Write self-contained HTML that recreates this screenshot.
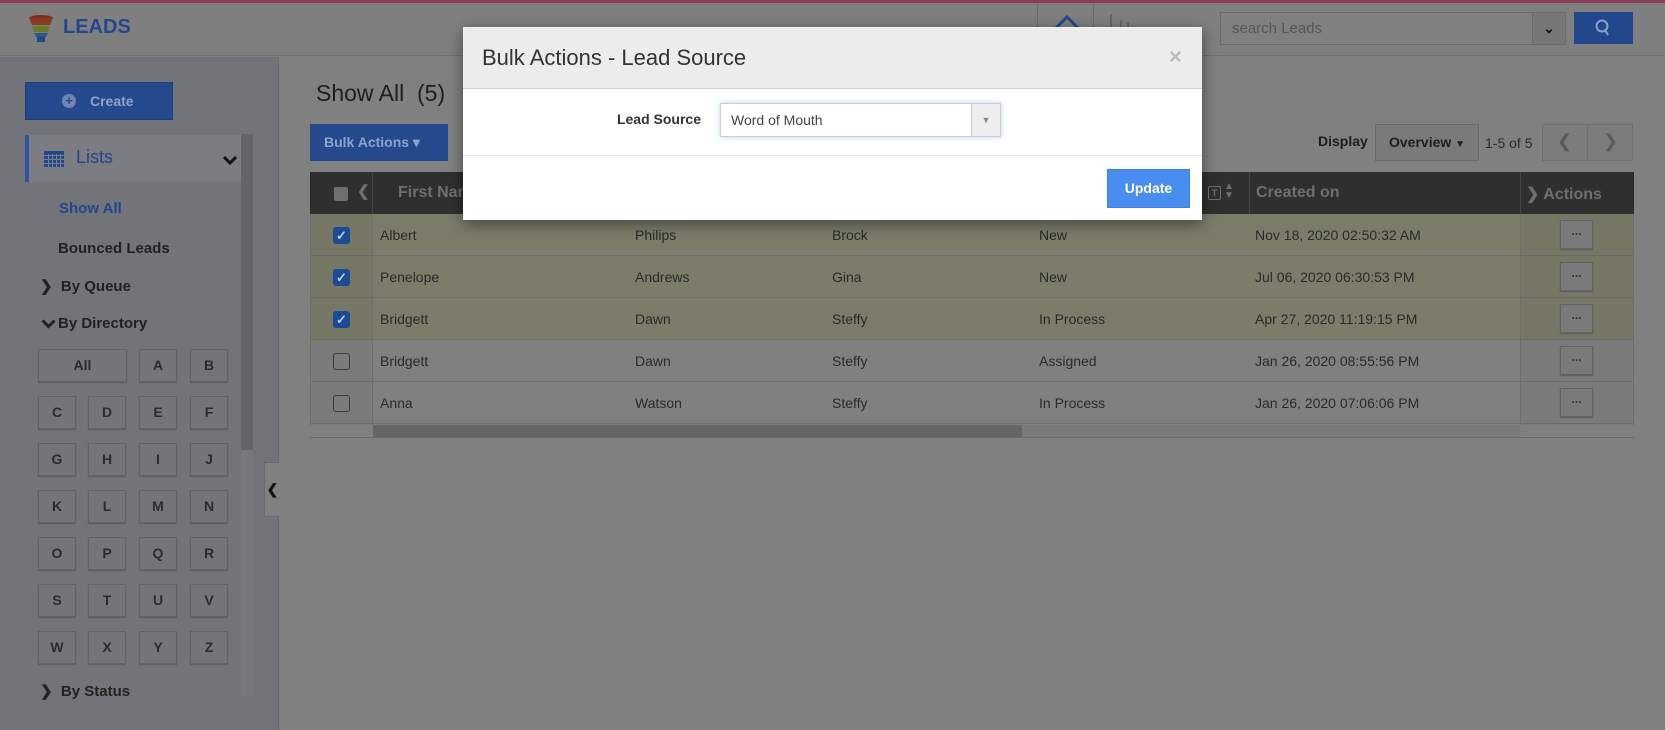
<!DOCTYPE html>
<html><head><meta charset="utf-8"><style>
*{box-sizing:border-box;margin:0;padding:0}
body{width:1665px;height:730px;position:relative;overflow:hidden;background:#808080;font-family:"Liberation Sans",sans-serif;color:#222}
.a{position:absolute}
.lb{position:absolute;width:38px;height:33px;background:#747579;border:1px solid #616266;box-shadow:0 1px 1px #5a5a5e;font-weight:bold;font-size:14px;color:#2b2b2b;text-align:center;line-height:31px}
.row{position:absolute;left:310px;width:1324px;height:42px;border-bottom:1px solid #6e6e6e;font-size:14px;color:#2a2a2a}
.row span{position:absolute;top:13px}
.cb{position:absolute;left:23px;top:13px;width:17px;height:17px;border-radius:3px}
.cbon{background:#1d4f9e;color:#cfd6e4;font-size:13px;text-align:center;line-height:17px;font-weight:bold}
.cboff{border:1px solid #3f3f3f;background:#808080}
.dots{position:absolute;left:1250px;top:6px;width:33px;height:29px;background:#7f7f7f;border:1px solid #666;box-shadow:0 1px 1px #5f5f5f;text-align:center;font-size:12px;line-height:20px;color:#333;font-weight:bold}
</style></head><body>
<!-- top pink line -->
<div class="a" style="left:0;top:0;width:1665px;height:3px;background:#8a3b55"></div>
<!-- header -->
<div class="a" style="left:0;top:3px;width:1665px;height:53px;background:#7f7f7f;border-bottom:1px solid #6d6d6d"></div>
<svg class="a" style="left:27px;top:14px" width="30" height="30" viewBox="0 0 30 30">
<ellipse cx="14" cy="4" rx="12" ry="3" fill="#7a2b24"/>
<path d="M2 4 H26 L23 11 H5Z" fill="#8a3a1e"/>
<path d="M5 12 H23 L21 18 H7Z" fill="#6b7a2a"/>
<path d="M7 19 H21 L19 23 H9Z" fill="#2a5a8a"/>
<rect x="10" y="23" width="8" height="5" fill="#1d4a80"/>
</svg>
<div class="a" style="left:63px;top:16px;font-size:20px;font-weight:bold;color:#23478c">LEADS</div>
<div class="a" style="left:1037px;top:3px;width:1px;height:53px;background:#6b6b6b"></div>
<div class="a" style="left:1093px;top:3px;width:1px;height:53px;background:#6b6b6b"></div>
<svg class="a" style="left:1054px;top:14px" width="26" height="16" viewBox="0 0 26 16"><path d="M2 14 L13 3 L24 14" fill="none" stroke="#23478c" stroke-width="3"/><path d="M6 14 V16 M20 14 V16" stroke="#23478c" stroke-width="2"/></svg>
<div class="a" style="left:1110px;top:14px;width:2px;height:16px;background:#666"></div>
<div class="a" style="left:1120px;top:20px;width:2px;height:10px;background:#666"></div>
<div class="a" style="left:1127px;top:22px;width:2px;height:8px;background:#666"></div>
<div class="a" style="left:1220px;top:12px;width:313px;height:33px;border:1px solid #6a6a6a;background:#808080;font-size:15px;color:#555;padding:7px 11px">search Leads</div>
<div class="a" style="left:1532px;top:12px;width:34px;height:33px;border:1px solid #6a6a6a;background:#777;text-align:center;line-height:31px;font-size:14px;color:#111;font-weight:bold">&#8964;</div>
<div class="a" style="left:1574px;top:12px;width:59px;height:32px;background:#23478c"></div>
<svg class="a" style="left:1594px;top:18px" width="18" height="20" viewBox="0 0 18 20"><circle cx="8" cy="8" r="5.5" fill="none" stroke="#8aa0c8" stroke-width="2"/><path d="M11 12 L14 17" stroke="#8aa0c8" stroke-width="2"/></svg>

<!-- sidebar -->
<div class="a" style="left:0;top:57px;width:279px;height:673px;background:#737479;border-right:1px solid #6a6a6a"></div>
<div class="a" style="left:25px;top:82px;width:148px;height:38px;background:#24498d;border:1px solid #1f3f78;color:#8ea3c9;font-weight:bold;font-size:14px;line-height:36px;padding-left:64px">Create</div>
<div class="a" style="left:62px;top:94px;width:14px;height:14px;border-radius:50%;background:#6f86b2;color:#24498d;font-size:13px;line-height:14px;text-align:center;font-weight:bold">+</div>
<div class="a" style="left:25px;top:135px;width:216px;height:47px;background:#7c7d82;border-left:4px solid #2a55a5"></div>
<svg class="a" style="left:44px;top:151px" width="20" height="16" viewBox="0 0 20 16"><rect x="0" y="0" width="20" height="16" fill="#23478c"/><g stroke="#7c7d82" stroke-width="1"><path d="M0 4.5H20M0 8.5H20M0 12.5H20M4.5 3V16M8.5 3V16M12.5 3V16M16.5 3V16"/></g></svg>
<div class="a" style="left:76px;top:147px;font-size:18px;color:#23478c">Lists</div>
<svg class="a" style="left:222px;top:155px" width="16" height="12" viewBox="0 0 16 12"><path d="M2 2 L8 8 L14 2" fill="none" stroke="#111" stroke-width="3"/></svg>
<div class="a" style="left:241px;top:134px;width:12px;height:563px;background:#77787c"></div>
<div class="a" style="left:241px;top:134px;width:12px;height:316px;background:#636468"></div>
<div class="a" style="left:59px;top:200px;font-size:15px;font-weight:bold;color:#23478c">Show All</div>
<div class="a" style="left:58px;top:240px;font-size:15px;font-weight:bold;color:#222">Bounced Leads</div>
<div class="a" style="left:40px;top:277px;font-size:15px;font-weight:bold;color:#222">&#10095;&nbsp; By Queue</div>
<svg class="a" style="left:41px;top:319px" width="15" height="10" viewBox="0 0 15 10"><path d="M1.5 1.5 L7.5 7.5 L13.5 1.5" fill="none" stroke="#222" stroke-width="3"/></svg>
<div class="a" style="left:58px;top:315px;font-size:15px;font-weight:bold;color:#222">By Directory</div>
<div class="a" style="left:40px;top:682px;font-size:15px;font-weight:bold;color:#222">&#10095;&nbsp; By Status</div>
<div class="lb" style="left:38px;top:349px;width:89px">All</div>
<div class="lb" style="left:139px;top:349px">A</div><div class="lb" style="left:190px;top:349px">B</div>
<div class="lb" style="left:38px;top:396px">C</div><div class="lb" style="left:88px;top:396px">D</div><div class="lb" style="left:139px;top:396px">E</div><div class="lb" style="left:190px;top:396px">F</div>
<div class="lb" style="left:38px;top:443px">G</div><div class="lb" style="left:88px;top:443px">H</div><div class="lb" style="left:139px;top:443px">I</div><div class="lb" style="left:190px;top:443px">J</div>
<div class="lb" style="left:38px;top:490px">K</div><div class="lb" style="left:88px;top:490px">L</div><div class="lb" style="left:139px;top:490px">M</div><div class="lb" style="left:190px;top:490px">N</div>
<div class="lb" style="left:38px;top:537px">O</div><div class="lb" style="left:88px;top:537px">P</div><div class="lb" style="left:139px;top:537px">Q</div><div class="lb" style="left:190px;top:537px">R</div>
<div class="lb" style="left:38px;top:584px">S</div><div class="lb" style="left:88px;top:584px">T</div><div class="lb" style="left:139px;top:584px">U</div><div class="lb" style="left:190px;top:584px">V</div>
<div class="lb" style="left:38px;top:631px">W</div><div class="lb" style="left:88px;top:631px">X</div><div class="lb" style="left:139px;top:631px">Y</div><div class="lb" style="left:190px;top:631px">Z</div>
<div class="a" style="left:264px;top:462px;width:16px;height:55px;background:#808080;border:1px solid #6a6a6a;border-right:none;font-weight:bold;font-size:14px;line-height:53px;text-align:center;color:#111">&#10094;</div>

<!-- main -->
<div class="a" style="left:316px;top:80px;font-size:23px;color:#1e1e1e">Show All&nbsp; (5)</div>
<div class="a" style="left:310px;top:124px;width:138px;height:37px;background:#24498d;color:#8ea3c9;font-weight:bold;font-size:14px;line-height:37px;padding-left:14px">Bulk Actions &#9662;</div>
<div class="a" style="left:1318px;top:133px;font-size:14px;font-weight:bold;color:#1e1e1e">Display</div>
<div class="a" style="left:1375px;top:124px;width:104px;height:37px;background:#7a7a7a;border:1px solid #686868;font-size:14px;font-weight:bold;color:#1e1e1e;line-height:35px;padding-left:13px">Overview <span style="font-size:10px">&#9660;</span></div>
<div class="a" style="left:1485px;top:135px;font-size:14px;color:#2a2a2a">1-5 of 5</div>
<div class="a" style="left:1542px;top:124px;width:91px;height:37px;border:1px solid #707070;background:#7c7c7c"></div>
<div class="a" style="left:1587px;top:124px;width:1px;height:37px;background:#707070"></div>
<div class="a" style="left:1557px;top:131px;font-size:18px;color:#5a5a5a">&#10094;</div>
<div class="a" style="left:1603px;top:131px;font-size:18px;color:#5a5a5a">&#10095;</div>

<!-- table -->
<div class="a" style="left:310px;top:172px;width:1324px;height:42px;background:#2f2f2f"></div>
<div class="a" style="left:372px;top:172px;width:1px;height:42px;background:#444"></div>
<div class="a" style="left:1249px;top:172px;width:1px;height:42px;background:#444"></div>
<div class="a" style="left:1520px;top:172px;width:1px;height:42px;background:#444"></div>
<div class="a" style="left:334px;top:187px;width:14px;height:14px;background:#6f6f6f;border-radius:2px"></div>
<div class="a" style="left:357px;top:182px;font-size:15px;font-weight:bold;color:#6f6f6f">&#10094;</div>
<div class="a" style="left:398px;top:184px;font-size:16px;font-weight:bold;color:#6f6f6f">First Name</div>
<div class="a" style="left:1208px;top:186px;width:13px;height:14px;border:1px solid #6f6f6f;border-radius:2px;font-size:9px;text-align:center;color:#6f6f6f;font-weight:bold;line-height:12px">T</div>
<div class="a" style="left:1224px;top:182px;font-size:10px;line-height:9px;color:#6f6f6f">&#9650;<br>&#9660;</div>
<div class="a" style="left:1256px;top:184px;font-size:16px;font-weight:bold;color:#6f6f6f">Created on</div>
<div class="a" style="left:1526px;top:184px;font-size:16px;font-weight:bold;color:#6f6f6f">&#10095; Actions</div>

<div class="row" style="top:214px;background:#7b7c6a"><div class="cb cbon">&#10003;</div><span style="left:70px">Albert</span><span style="left:325px">Philips</span><span style="left:522px">Brock</span><span style="left:729px">New</span><span style="left:945px">Nov 18, 2020 02:50:32 AM</span><div class="dots">...</div></div>
<div class="row" style="top:256px;background:#7b7c6a"><div class="cb cbon">&#10003;</div><span style="left:70px">Penelope</span><span style="left:325px">Andrews</span><span style="left:522px">Gina</span><span style="left:729px">New</span><span style="left:945px">Jul 06, 2020 06:30:53 PM</span><div class="dots">...</div></div>
<div class="row" style="top:298px;background:#7b7c6a"><div class="cb cbon">&#10003;</div><span style="left:70px">Bridgett</span><span style="left:325px">Dawn</span><span style="left:522px">Steffy</span><span style="left:729px">In Process</span><span style="left:945px">Apr 27, 2020 11:19:15 PM</span><div class="dots">...</div></div>
<div class="row" style="top:340px;background:#808080"><div class="cb cboff"></div><span style="left:70px">Bridgett</span><span style="left:325px">Dawn</span><span style="left:522px">Steffy</span><span style="left:729px">Assigned</span><span style="left:945px">Jan 26, 2020 08:55:56 PM</span><div class="dots">...</div></div>
<div class="row" style="top:382px;background:#808080"><div class="cb cboff"></div><span style="left:70px">Anna</span><span style="left:325px">Watson</span><span style="left:522px">Steffy</span><span style="left:729px">In Process</span><span style="left:945px">Jan 26, 2020 07:06:06 PM</span><div class="dots">...</div></div>
<div class="a" style="left:310px;top:214px;width:63px;height:211px;background:rgba(0,0,0,0.04);border-right:1px solid #6e6e6e;border-left:1px solid #6e6e6e"></div>
<div class="a" style="left:1520px;top:214px;width:114px;height:211px;background:rgba(0,0,0,0.04);border-left:1px solid #6e6e6e;border-right:1px solid #6e6e6e"></div>
<div class="a" style="left:373px;top:425px;width:1147px;height:12px;background:#7a7a7a"></div>
<div class="a" style="left:373px;top:425px;width:649px;height:12px;background:#666"></div>
<div class="a" style="left:310px;top:437px;width:1324px;height:1px;background:#6a6a6a"></div>

<!-- modal -->
<div class="a" style="left:463px;top:27px;width:739px;height:193px;background:#fff;box-shadow:0 4px 14px rgba(0,0,0,0.45)">
  <div class="a" style="left:0;top:0;width:739px;height:62px;background:#ececec;border-bottom:1px solid #d4d4d4"></div>
  <div class="a" style="left:19px;top:18px;font-size:22px;color:#333">Bulk Actions - Lead Source</div>
  <div class="a" style="left:706px;top:17px;font-size:22px;color:#bbb;font-weight:bold">&times;</div>
  <div class="a" style="left:146px;top:84px;font-size:14px;font-weight:bold;color:#333;width:92px;text-align:right">Lead Source</div>
  <div class="a" style="left:257px;top:76px;width:281px;height:34px;border:1px solid #ccc;box-shadow:0 0 5px rgba(102,175,233,0.5);font-size:14px;color:#444;padding:8px 10px">Word of Mouth</div>
  <div class="a" style="left:508px;top:77px;width:29px;height:32px;background:#eee;border-left:1px solid #ccc;font-size:9px;color:#888;text-align:center;line-height:32px">&#9660;</div>
  <div class="a" style="left:0;top:128px;width:739px;height:1px;background:#e5e5e5"></div>
  <div class="a" style="left:644px;top:142px;width:83px;height:39px;background:#4a8df1;border:1px solid #3f7fe0;color:#fff;font-weight:bold;font-size:14px;text-align:center;line-height:37px">Update</div>
</div>
</body></html>
